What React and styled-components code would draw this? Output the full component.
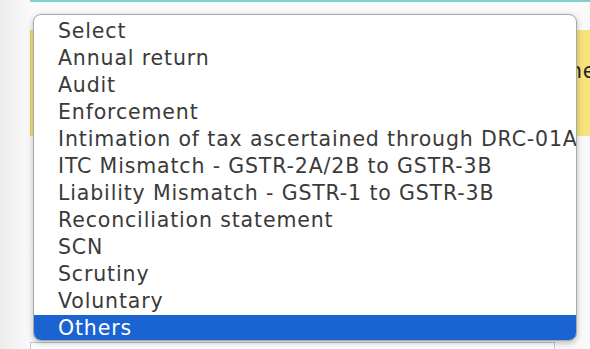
import styled, { createGlobalStyle } from "styled-components";

const Global = createGlobalStyle`
  html, body {
    margin: 0;
    padding: 0;
    width: 590px;
    height: 349px;
    overflow: hidden;
    background: #f3f3f3;
  }
`;

const Page = styled.div`
  position: relative;
  width: 590px;
  height: 349px;
  overflow: hidden;
  background: linear-gradient(to right, #ececec 0px, #fafafa 30px, #fafafa 100%);
  font-family: "DejaVu Sans", Verdana, sans-serif;
`;

const Form = styled.div`
  margin-left: 30px;
  width: 620px;
  display: flex;
  flex-direction: column;
`;

const TealBar = styled.div`
  height: 2px;
  background: #7fd3cb;
`;

const Notice = styled.div`
  margin-top: 28px;
  height: 106px;
  background: #f6e37c;
  border-left: 1px solid #e0cf6a;
  display: flex;
  align-items: center;
  padding: 0 0 24px 538px;
  box-sizing: border-box;
  overflow: hidden;
  font-size: 20.5px;
  letter-spacing: 0.85px;
  color: #222;
  white-space: nowrap;
`;

const Input = styled.div`
  margin-top: 206px;
  width: 523px;
  height: 20px;
  border: 1px solid #b9cde0;
  background: #fff;
`;

const Listbox = styled.ul`
  position: absolute;
  left: 33px;
  top: 14px;
  width: 544px;
  height: 327px;
  box-sizing: border-box;
  margin: 0;
  padding: 3px 0 0;
  list-style: none;
  background: #fff;
  border: 1px solid #a8a8a8;
  border-radius: 8px;
  box-shadow: 0 2px 6px rgba(0, 0, 0, 0.25);
  overflow: hidden;
`;

const Option = styled.li`
  height: 27px;
  line-height: 27px;
  padding-left: 24px;
  font-size: 20.5px;
  letter-spacing: 0.85px;
  white-space: nowrap;
  color: ${(p) => (p.$selected ? "#fff" : "#3a3a3a")};
  background: ${(p) => (p.$selected ? "#1a64d2" : "transparent")};
`;

const options = [
  "Select",
  "Annual return",
  "Audit",
  "Enforcement",
  "Intimation of tax ascertained through DRC-01A",
  "ITC Mismatch - GSTR-2A/2B to GSTR-3B",
  "Liability Mismatch - GSTR-1 to GSTR-3B",
  "Reconciliation statement",
  "SCN",
  "Scrutiny",
  "Voluntary",
  "Others",
];

export default function App() {
  return (
    <>
      <Global />
      <Page>
        <Form>
          <TealBar />
          <Notice>nel details</Notice>
          <Input />
        </Form>
        <Listbox>
          {options.map((o) => (
            <Option key={o} $selected={o === "Others"}>
              {o}
            </Option>
          ))}
        </Listbox>
      </Page>
    </>
  );
}
